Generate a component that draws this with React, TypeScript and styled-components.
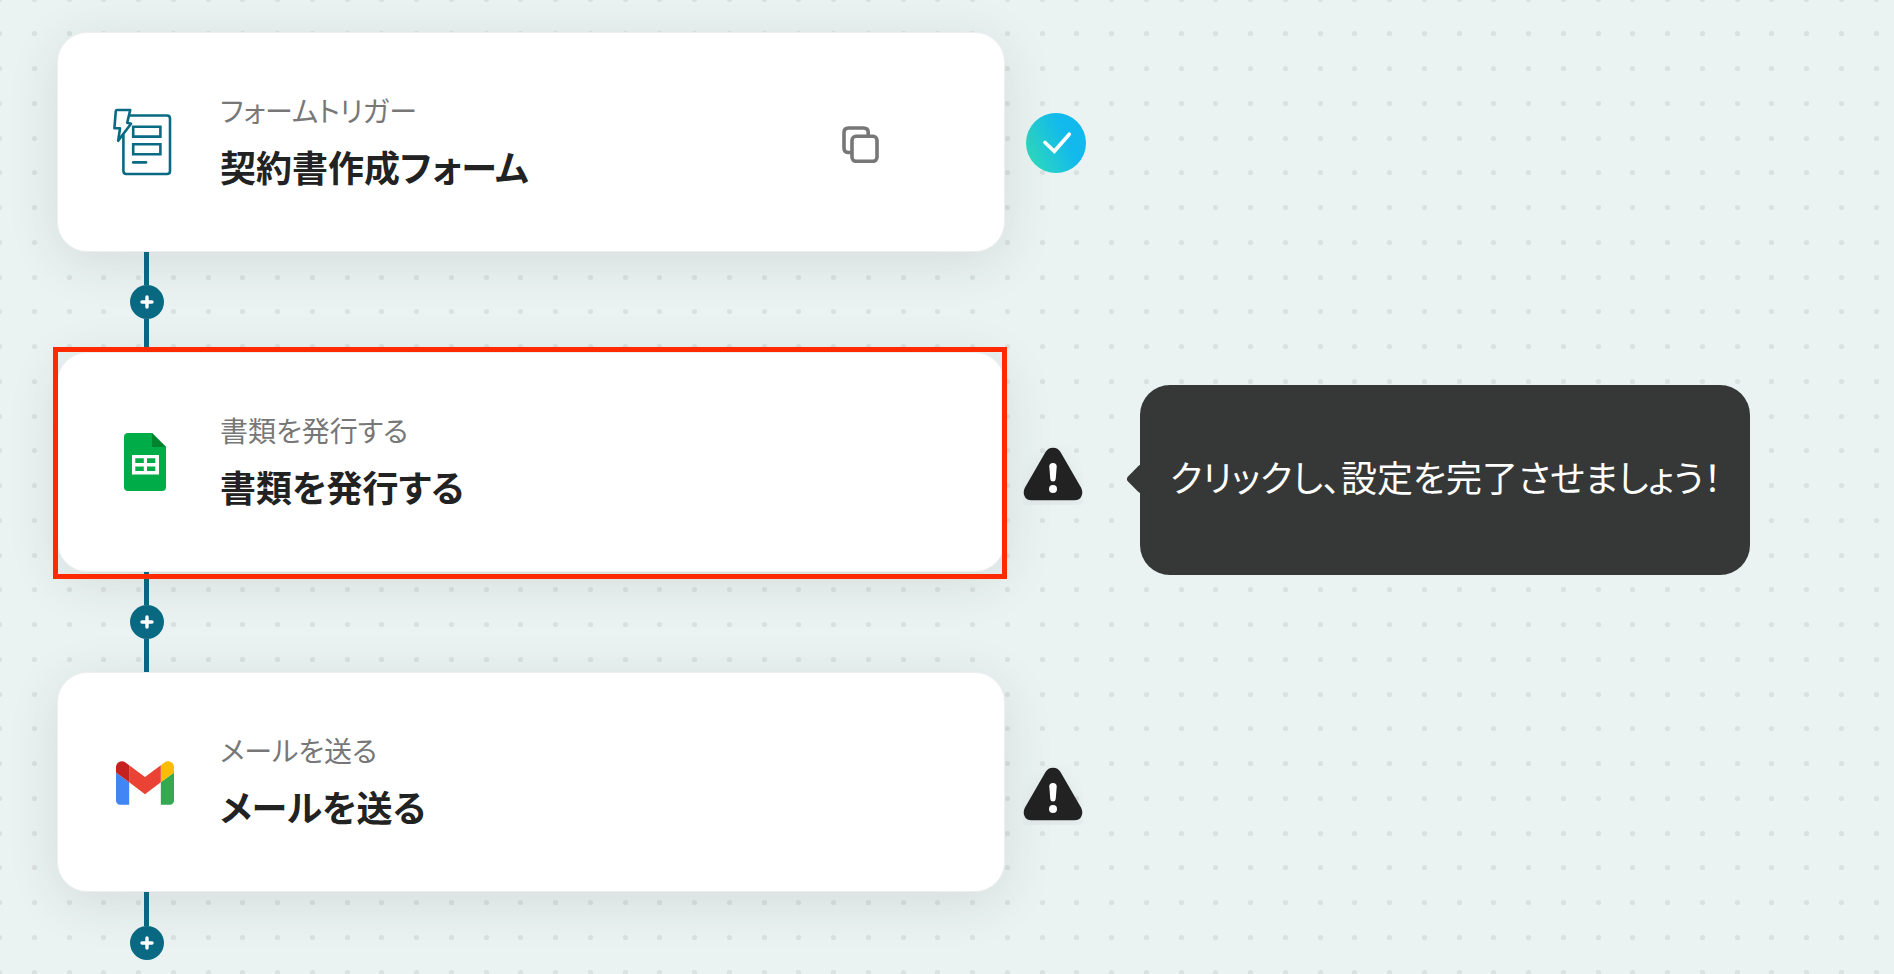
import React from "react";
import styled, { createGlobalStyle } from "styled-components";

const GlobalStyle = createGlobalStyle`
  *, *::before, *::after { box-sizing: border-box; }
  html, body { margin: 0; }
  body {
    background: #eaf3f2;
    color: #222;
    font-family: "Noto Sans CJK JP", "Noto Sans", sans-serif;
    font-feature-settings: "palt";
  }
  svg { display: block; }
`;

const Canvas = styled.main`
  position: relative;
  min-height: 100vh;
  padding: 32px 57px 12px;
  overflow: hidden;
`;

const DotGrid = styled.svg`
  position: absolute;
  inset: 0;
  width: 100%;
  height: 100%;
`;

const Flow = styled.div`
  position: relative;
  display: flex;
  flex-direction: column;
`;

const StepRow = styled.section`
  display: flex;
  align-items: center;
`;

const Card = styled.article`
  position: relative;
  flex: 0 1 948px;
  display: flex;
  align-items: center;
  gap: 43px;
  min-height: 220px;
  padding: 0 125px 0 55px;
  background: #fff;
  border: 1px solid #eeefef;
  border-radius: 30px;
  box-shadow: 0 10px 52px rgba(34, 50, 46, 0.11);
`;

const Highlight = styled.div`
  position: absolute;
  inset: -6px -3px -8px -5px;
  border: 5px solid #ff2a00;
  pointer-events: none;
`;

const IconSlot = styled.div`
  flex: none;
  display: flex;
  justify-content: center;
  width: 64px;
`;

const Texts = styled.div`
  flex: 1;
  display: flex;
  flex-direction: column;
  gap: 10px;
  padding-bottom: 2px;
`;

const Kind = styled.p`
  margin: 0;
  color: #777;
  font-size: 28px;
  line-height: 40px;
`;

const Title = styled.h2`
  margin: 0;
  font-size: 36px;
  font-weight: 700;
  line-height: 52px;
`;

const CopyButton = styled.button`
  display: flex;
  padding: 4px 0 0;
  border: 0;
  background: none;
  cursor: pointer;
`;

const Status = styled.div<{ $done?: boolean }>`
  flex: none;
  width: 60px;
  margin: ${(p) => (p.$done ? "2px 0 0 21px" : "26px 0 0 18px")};
`;

const Tooltip = styled.div`
  position: relative;
  flex: none;
  display: flex;
  align-items: center;
  min-height: 190px;
  margin: 18px 0 -18px 57px;
  padding: 0 28px 8px 30px;
  border-radius: 30px;
  background: #363837;
  color: #fff;
  font-size: 36px;
  line-height: 52px;
  white-space: nowrap;

  &::before {
    content: "";
    position: absolute;
    left: -10px;
    top: 50%;
    width: 22px;
    height: 22px;
    margin-top: -12px;
    border-radius: 4px;
    background: #363837;
    transform: rotate(45deg);
  }
`;

const Connector = styled.div<{ $last?: boolean }>`
  display: flex;
  flex-direction: column;
  width: 34px;
  height: ${(p) => (p.$last ? 68 : 100)}px;
  margin-left: 73px;
`;

const Line = styled.span`
  flex: 1;
  width: 5px;
  margin-left: 14px;
  background: #0a6a83;
`;

const AddButton = styled.button`
  display: flex;
  flex: none;
  width: 34px;
  height: 34px;
  padding: 0;
  border: 0;
  border-radius: 50%;
  background: #0a6a83;
  cursor: pointer;
`;

const WarningShape = styled.path`
  fill: #222;
  filter: drop-shadow(0 4px 8px rgba(0, 0, 0, 0.06));
`;

const FormIcon = () => (
  <svg width="64" height="68" viewBox="0 0 64 68" fill="none" stroke="#0a6a83" strokeWidth="2.6" strokeLinejoin="round" strokeLinecap="round" aria-hidden="true">
    <path d="M17 7.5H54Q57 7.5 57 10.5V63Q57 66 54 66H13.4Q10.4 66 10.4 63V27" />
    <path d="M4 2H17.2L14.2 14.8L18 15.8L5.2 32.8L7 20.3H1.4L2.8 3Q3 2 4 2Z" />
    <path d="M20.2 18.7H47.4V28.6H20.2ZM20.2 36.2H47.4V46.2H20.2Z" strokeLinejoin="miter" />
    <path d="M20.2 54.4H33" />
  </svg>
);

const SheetsIcon = () => (
  <svg width="42" height="58" viewBox="0 0 42 58" aria-hidden="true">
    <path fill="#00ac47" d="M4 0H28L42 14V54Q42 58 38 58H4Q0 58 0 54V4Q0 0 4 0Z" />
    <path fill="#00832d" d="M28 0L42 14H28Z" />
    <path fill="#fff" fillRule="evenodd" d="M8 22H35V41.5H8ZM11.3 25.3V30H19.8V25.3ZM23 25.3V30H31.3V25.3ZM11.3 33.5V38H19.8V33.5ZM23 33.5V38H31.3V33.5Z" />
  </svg>
);

const GmailIcon = () => (
  <svg width="58" height="46" viewBox="52 39 88 69" aria-hidden="true">
    <path fill="#4285f4" d="M58 108h14V74L52 59v43c0 3.32 2.69 6 6 6" />
    <path fill="#34a853" d="M120 108h14c3.32 0 6-2.69 6-6V59l-20 15" />
    <path fill="#fbbc04" d="M120 48v26l20-15v-8c0-7.42-8.47-11.65-14.4-7.2" />
    <path fill="#ea4335" d="M72 74V48l24 18 24-18v26L96 92" />
    <path fill="#c5221f" d="M52 51v8l20 15V48l-5.6-4.2c-5.94-4.45-14.4-.22-14.4 7.2" />
  </svg>
);

const CopyIcon = () => (
  <svg width="37" height="37" viewBox="0 0 37 37" fill="none" stroke="#777" strokeWidth="3.6" aria-hidden="true">
    <rect x="10" y="10.3" width="25" height="25" rx="4" />
    <path d="M9.5 26.5H6.5Q2 26.5 2 22V6.5Q2 2 6.5 2H21.5Q26.2 2 26.2 6.5V9.5" />
  </svg>
);

const CheckIcon = () => (
  <svg width="60" height="60" viewBox="0 0 60 60" role="img" aria-label="設定済み">
    <defs>
      <linearGradient id="done" x1="0" y1="0.75" x2="0.85" y2="0.35">
        <stop offset="0.05" stopColor="#2ed9be" />
        <stop offset="0.8" stopColor="#12b9ec" />
      </linearGradient>
    </defs>
    <circle cx="30" cy="30" r="30" fill="url(#done)" />
    <path d="M19 29.5L28.3 38.3L43.3 21.2" fill="none" stroke="#fff" strokeWidth="3.6" strokeLinecap="round" />
  </svg>
);

const WarningIcon = () => (
  <svg width="60" height="60" viewBox="0 0 60 60" role="img" aria-label="未設定">
    <WarningShape d="M22.5 7Q25 2.7 30 2.7T37.5 7L58 42.5Q60.3 47 58.5 51Q56.8 55.3 51.5 55.3H8.5Q3.2 55.3 1.5 51Q-.3 47 2 42.5Z" />
    <path fill="#fff" d="M26.3 21.5Q26.3 18 30 18T33.7 21.5L32.7 34Q32.5 36.5 30 36.5T27.3 34Z" />
    <circle cx="30" cy="44" r="4" fill="#fff" />
  </svg>
);

const PlusIcon = () => (
  <svg width="34" height="34" viewBox="0 0 34 34" stroke="#fff" strokeWidth="3.4" strokeLinecap="round" aria-hidden="true">
    <path d="M12 17H22M17 12V22" />
  </svg>
);

const DOT_COLUMNS = [3.5, 38.5, 73.5, 107.5];
const DOT_ROWS = [3.5, 37.5, 72.5, 107.5];

type Step = {
  kind: string;
  title: string;
  icon: React.ReactNode;
  done?: boolean;
  copyable?: boolean;
  highlighted?: boolean;
  hint?: string;
};

const steps: Step[] = [
  { kind: "フォームトリガー", title: "契約書作成フォーム", icon: <FormIcon />, done: true, copyable: true },
  {
    kind: "書類を発行する",
    title: "書類を発行する",
    icon: <SheetsIcon />,
    highlighted: true,
    hint: "クリックし、設定を完了させましょう！",
  },
  { kind: "メールを送る", title: "メールを送る", icon: <GmailIcon /> },
];

export default function App() {
  return (
    <>
      <GlobalStyle />
      <Canvas>
        <DotGrid aria-hidden="true">
          <defs>
            <pattern id="dots" width="139" height="139" x="-4" y="-4" patternUnits="userSpaceOnUse">
              {DOT_ROWS.map((y) =>
                DOT_COLUMNS.map((x) => <circle key={`${x}-${y}`} cx={x} cy={y} r="2.6" fill="#dae1e0" />)
              )}
            </pattern>
          </defs>
          <rect width="100%" height="100%" fill="url(#dots)" />
        </DotGrid>
        <Flow>
          {steps.map((step, i) => (
            <React.Fragment key={step.kind}>
              <StepRow>
                <Card>
                  <IconSlot>{step.icon}</IconSlot>
                  <Texts>
                    <Kind>{step.kind}</Kind>
                    <Title>{step.title}</Title>
                  </Texts>
                  {step.copyable && (
                    <CopyButton type="button" aria-label="コピー">
                      <CopyIcon />
                    </CopyButton>
                  )}
                  {step.highlighted && <Highlight />}
                </Card>
                <Status $done={step.done}>{step.done ? <CheckIcon /> : <WarningIcon />}</Status>
                {step.hint && <Tooltip role="tooltip">{step.hint}</Tooltip>}
              </StepRow>
              <Connector $last={i === steps.length - 1}>
                <Line />
                <AddButton type="button" aria-label="ステップを追加">
                  <PlusIcon />
                </AddButton>
                {i < steps.length - 1 && <Line />}
              </Connector>
            </React.Fragment>
          ))}
        </Flow>
      </Canvas>
    </>
  );
}
